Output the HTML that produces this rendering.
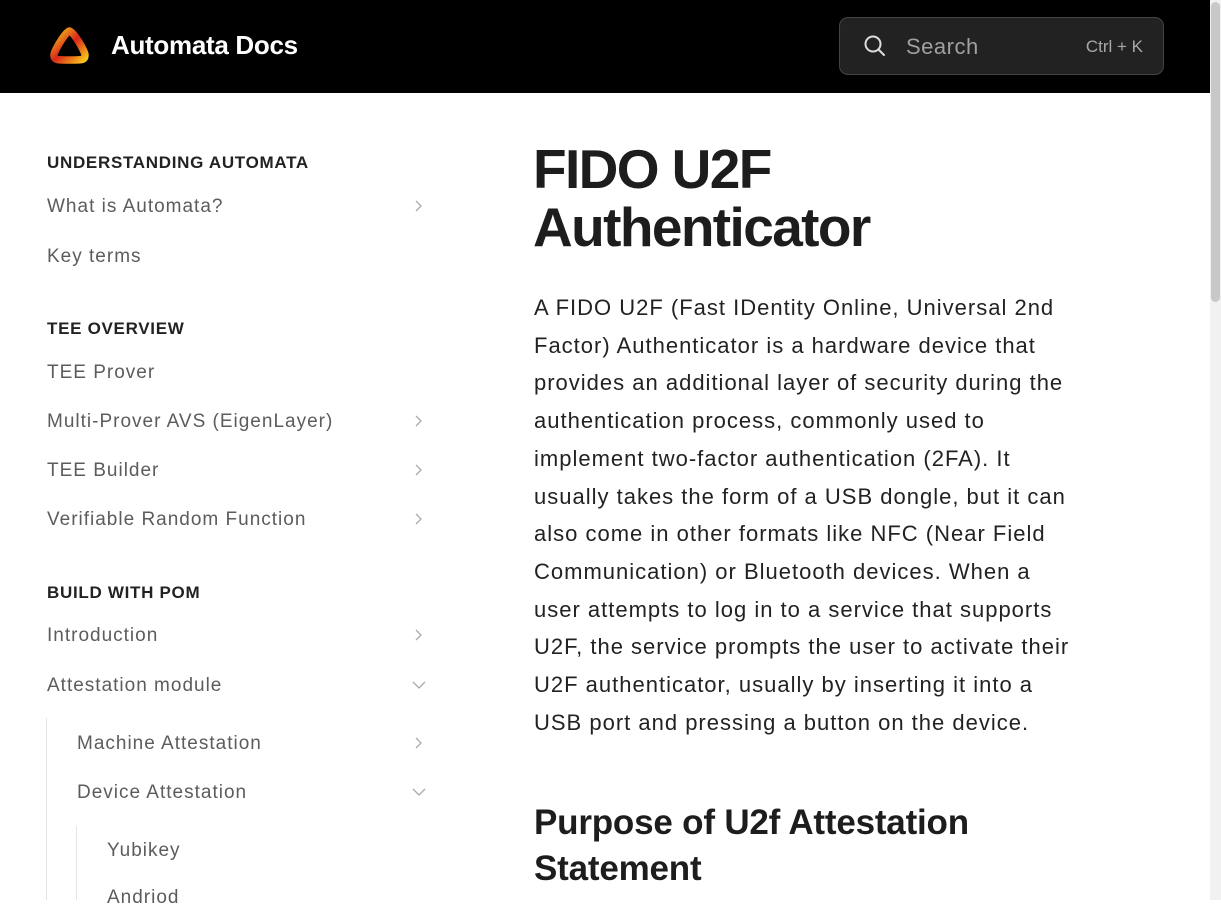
<!DOCTYPE html>
<html><head><meta charset="utf-8"><style>
*{margin:0;padding:0;box-sizing:border-box}
body{width:1221px;height:900px;overflow:hidden;background:#fff;font-family:"Liberation Sans",sans-serif;position:relative}
.hdr{position:absolute;left:0;top:0;width:1210px;height:93px;background:#000}
.brand{position:absolute;left:111px;top:30px;color:#fff;font-size:26px;font-weight:bold;letter-spacing:-0.3px}
.search{position:absolute;left:839px;top:17px;width:325px;height:58px;background:#222;border:1px solid #444;border-radius:9px}
.search .t{position:absolute;left:66px;top:16px;color:#a0a0a0;font-size:22px;letter-spacing:0.5px}
.search .k{position:absolute;right:20px;top:19px;color:#a8a8a8;font-size:17px}
.sb{position:absolute;right:0;top:0;width:11px;height:900px;background:#f1f1f1}
.sb div{position:absolute;left:1px;top:2px;width:9px;height:300px;background:#c8c8c8;border-radius:5px}
.h{position:absolute;left:47px;font-size:17px;font-weight:bold;color:#222;letter-spacing:0.7px}
.i{position:absolute;font-size:19px;color:#5c5c5c;letter-spacing:1px}
.ch{position:absolute;left:410px;width:16px;height:16px}
.line{position:absolute;background:#e5e5e5;width:1px}
h1{position:absolute;left:533px;top:140px;font-size:55px;line-height:58px;font-weight:bold;color:#1d1d1d;letter-spacing:-1.6px}
.p{position:absolute;left:534px;top:289px;font-size:22px;line-height:37.7px;color:#222;white-space:nowrap;letter-spacing:1px}
h2{position:absolute;left:534px;top:800px;font-size:35px;line-height:46px;font-weight:bold;color:#1d1d1d;letter-spacing:-0.2px}
</style></head><body>
<div class="hdr">
<svg style="position:absolute;left:47px;top:25px" width="45" height="42" viewBox="0 0 45 42">
<defs><linearGradient id="g" x1="0" y1="0" x2="1" y2="1"><stop offset="0" stop-color="#f7c61d"/><stop offset="0.5" stop-color="#d8261a"/><stop offset="1" stop-color="#f9c41a"/></linearGradient></defs>
<path d="M22.5 6 C26 6 38 26 38 30 C38 35 36 35 22.5 35 C9 35 7 35 7 30 C7 26 19 6 22.5 6 Z" fill="none" stroke="url(#g)" stroke-width="7.5" stroke-linejoin="round"/>
</svg>
<div class="brand">Automata Docs</div>
<div class="search">
<svg style="position:absolute;left:23px;top:16px" width="24" height="24" viewBox="0 0 24 24"><circle cx="10" cy="10" r="7.5" fill="none" stroke="#ddd" stroke-width="2"/><path d="M15.5 15.5 L21 21" stroke="#ddd" stroke-width="2" stroke-linecap="round"/></svg>
<div class="t">Search</div><div class="k">Ctrl + K</div>
</div>
</div>
<div class="sb"><div></div></div>

<div class="h" style="top:153px">UNDERSTANDING AUTOMATA</div>
<div class="i" style="left:47px;top:196px">What is Automata?</div>
<div class="i" style="left:47px;top:246px">Key terms</div>
<div class="h" style="top:319px">TEE OVERVIEW</div>
<div class="i" style="left:47px;top:362px">TEE Prover</div>
<div class="i" style="left:47px;top:411px">Multi-Prover AVS (EigenLayer)</div>
<div class="i" style="left:47px;top:460px">TEE Builder</div>
<div class="i" style="left:47px;top:509px">Verifiable Random Function</div>
<div class="h" style="top:583px">BUILD WITH POM</div>
<div class="i" style="left:47px;top:625px">Introduction</div>
<div class="i" style="left:47px;top:675px">Attestation module</div>
<div class="line" style="left:46px;top:718px;height:182px"></div>
<div class="i" style="left:77px;top:733px">Machine Attestation</div>
<div class="i" style="left:77px;top:782px">Device Attestation</div>
<div class="line" style="left:76px;top:826px;height:74px"></div>
<div class="i" style="left:107px;top:840px">Yubikey</div>
<div class="i" style="left:107px;top:887px">Andriod</div>

<svg class="ch" style="top:198px" viewBox="0 0 16 16"><path d="M6 3 L11 8 L6 13" fill="none" stroke="#aaa" stroke-width="1.3"/></svg>
<svg class="ch" style="top:413px" viewBox="0 0 16 16"><path d="M6 3 L11 8 L6 13" fill="none" stroke="#aaa" stroke-width="1.3"/></svg>
<svg class="ch" style="top:462px" viewBox="0 0 16 16"><path d="M6 3 L11 8 L6 13" fill="none" stroke="#aaa" stroke-width="1.3"/></svg>
<svg class="ch" style="top:511px" viewBox="0 0 16 16"><path d="M6 3 L11 8 L6 13" fill="none" stroke="#aaa" stroke-width="1.3"/></svg>
<svg class="ch" style="top:627px" viewBox="0 0 16 16"><path d="M6 3 L11 8 L6 13" fill="none" stroke="#aaa" stroke-width="1.3"/></svg>
<svg class="ch" style="top:677px;left:411px" viewBox="0 0 16 16"><path d="M2 5 L8 11 L14 5" fill="none" stroke="#aaa" stroke-width="1.3"/></svg>
<svg class="ch" style="top:735px" viewBox="0 0 16 16"><path d="M6 3 L11 8 L6 13" fill="none" stroke="#aaa" stroke-width="1.3"/></svg>
<svg class="ch" style="top:784px;left:411px" viewBox="0 0 16 16"><path d="M2 5 L8 11 L14 5" fill="none" stroke="#aaa" stroke-width="1.3"/></svg>

<h1>FIDO U2F<br>Authenticator</h1>
<div class="p">A FIDO U2F (Fast IDentity Online, Universal 2nd<br>Factor) Authenticator is a hardware device that<br>provides an additional layer of security during the<br>authentication process, commonly used to<br>implement two-factor authentication (2FA). It<br>usually takes the form of a USB dongle, but it can<br>also come in other formats like NFC (Near Field<br>Communication) or Bluetooth devices. When a<br>user attempts to log in to a service that supports<br>U2F, the service prompts the user to activate their<br>U2F authenticator, usually by inserting it into a<br>USB port and pressing a button on the device.</div>
<h2>Purpose of U2f Attestation<br>Statement</h2>
</body></html>
